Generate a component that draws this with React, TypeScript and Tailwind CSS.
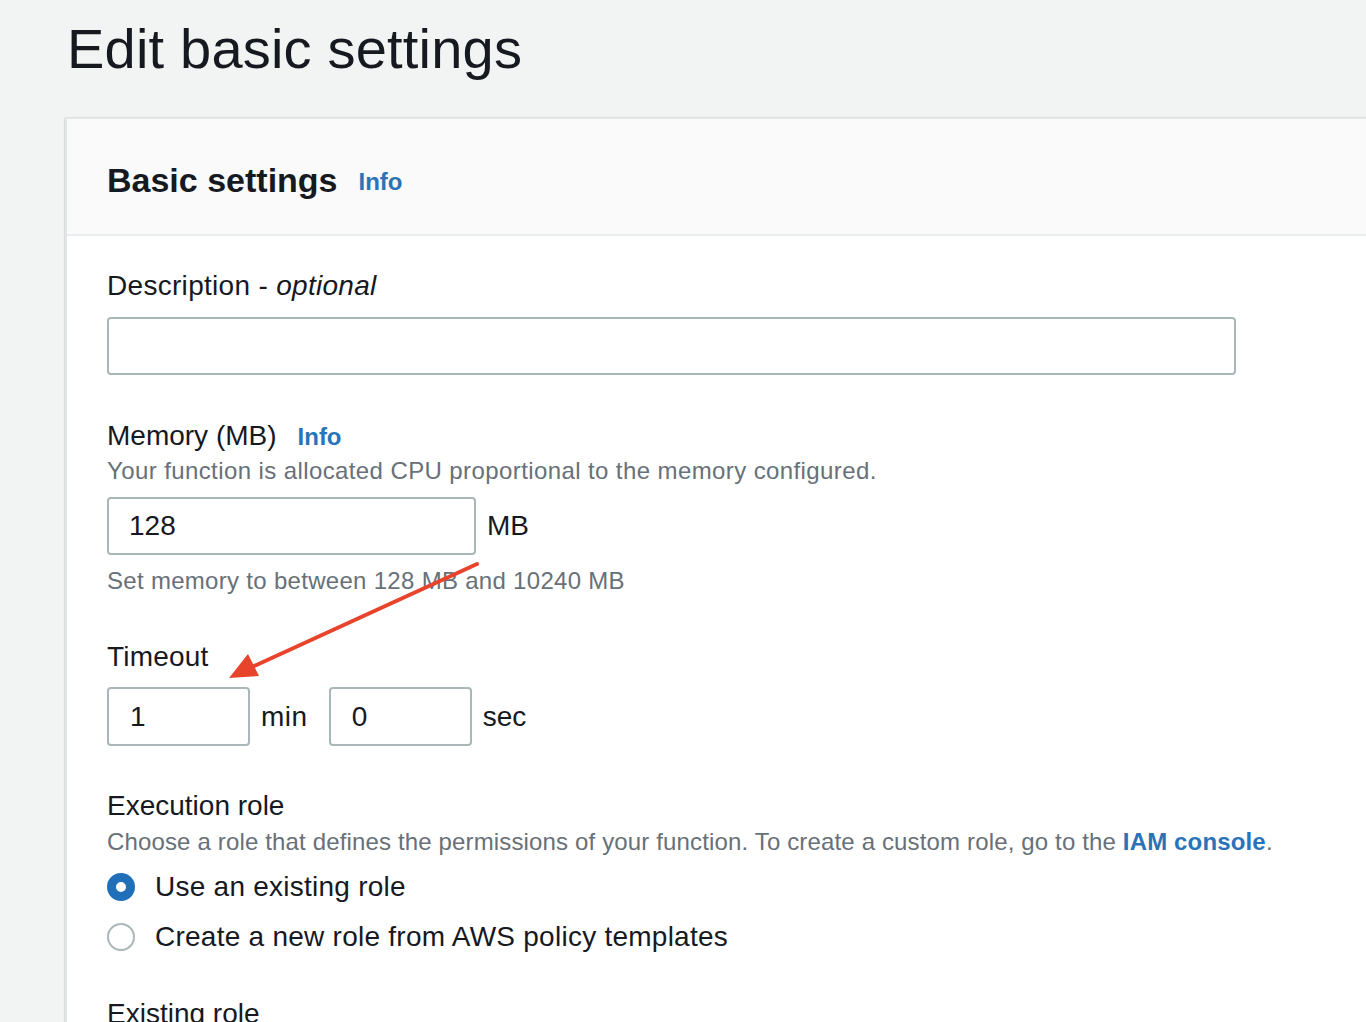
import React from "react";

const font = { fontFamily: '"Liberation Sans", Arial, sans-serif' };

function Radio({ checked, label }: { checked: boolean; label: string }) {
  return (
    <div className="flex items-center h-[40px]">
      {checked ? (
        <span className="w-[28px] h-[28px] rounded-full border-[9px] border-[#1f70b8] bg-white box-border" />
      ) : (
        <span className="w-[28px] h-[28px] rounded-full border-2 border-[#aab7b8] bg-white box-border" />
      )}
      <span className="ml-[20px] text-[28px] leading-[40px] text-[#16191f] tracking-[0.25px]">{label}</span>
    </div>
  );
}

export default function App() {
  return (
    <div className="relative w-[1366px] h-[1022px] overflow-hidden bg-[#f2f3f3]" style={font}>
      <h1 className="pl-[67px] pt-[17px] text-[56px] leading-[64px] text-[#16191f] font-normal tracking-[0.2px]">
        Edit basic settings
      </h1>
      <div className="mt-[36px] ml-[65px] w-[1400px] bg-white border-l-2 border-t-2 border-[#e3e6e6] shadow-[0_1px_2px_rgba(0,28,36,0.3)]">
        <div className="h-[117px] bg-[#fafafa] border-b-2 border-[#eaeded] flex items-center pl-[40px] pt-[6px]">
          <span className="text-[34px] leading-[44px] font-bold text-[#16191f]">Basic settings</span>
          <span className="ml-[21px] text-[24px] leading-[44px] font-bold text-[#2a73b8] pt-[4px]">Info</span>
        </div>
        <div className="pl-[40px] pt-[30px] pb-[40px]">
          <div className="text-[28px] leading-[40px] text-[#16191f] tracking-[0.3px]">
            Description - <i>optional</i>
          </div>
          <div className="mt-[11px] w-[1129px] h-[58px] border-2 border-[#aab7b8] rounded-[4px] bg-white" />

          <div className="mt-[41px] flex items-baseline">
            <span className="text-[28px] leading-[40px] text-[#16191f]">Memory (MB)</span>
            <span className="ml-[21px] text-[24px] font-bold text-[#2a73b8]">Info</span>
          </div>
          <div className="text-[24px] leading-[32px] text-[#687078] -mt-[1px] tracking-[0.4px]">
            Your function is allocated CPU proportional to the memory configured.
          </div>
          <div className="mt-[10px] flex items-center">
            <div className="w-[369px] h-[58px] border-2 border-[#aab7b8] rounded-[4px] bg-white flex items-center pl-[20px] text-[28px] text-[#16191f]">
              128
            </div>
            <span className="ml-[11px] text-[28px] text-[#16191f]">MB</span>
          </div>
          <div className="mt-[10px] text-[24px] leading-[32px] text-[#687078] tracking-[0.3px]">
            Set memory to between 128 MB and 10240 MB
          </div>

          <div className="mt-[40px] text-[28px] leading-[40px] text-[#16191f] tracking-[0.2px]">Timeout</div>
          <div className="mt-[10px] flex items-center">
            <div className="w-[143px] h-[59px] border-2 border-[#aab7b8] rounded-[4px] bg-white flex items-center pl-[21px] text-[28px] text-[#16191f]">
              1
            </div>
            <span className="ml-[11px] text-[28px] text-[#16191f] tracking-[0.5px]">min</span>
            <div className="ml-[21px] w-[143px] h-[59px] border-2 border-[#aab7b8] rounded-[4px] bg-white flex items-center pl-[21px] text-[28px] text-[#16191f]">
              0
            </div>
            <span className="ml-[11px] text-[28px] text-[#16191f]">sec</span>
          </div>

          <div className="mt-[40px] text-[28px] leading-[40px] text-[#16191f]">Execution role</div>
          <div className="text-[24px] leading-[32px] text-[#687078] tracking-[0.15px]">
            Choose a role that defines the permissions of your function. To create a custom role, go to the{" "}
            <span className="font-bold text-[#2a73b8]">IAM console</span>.
          </div>
          <div className="mt-[9px] flex flex-col gap-[10px]">
            <Radio checked label="Use an existing role" />
            <Radio checked={false} label="Create a new role from AWS policy templates" />
          </div>
          <div className="mt-[37px] text-[28px] leading-[40px] text-[#16191f]">Existing role</div>
        </div>
      </div>
      <svg className="absolute left-0 top-0" width="1366" height="1022" viewBox="0 0 1366 1022">
        <line x1="477" y1="564" x2="252" y2="667" stroke="#e8432b" strokeWidth="4" strokeLinecap="round" />
        <polygon points="229,678 248,654 259,676" fill="#e8432b" />
      </svg>
    </div>
  );
}
